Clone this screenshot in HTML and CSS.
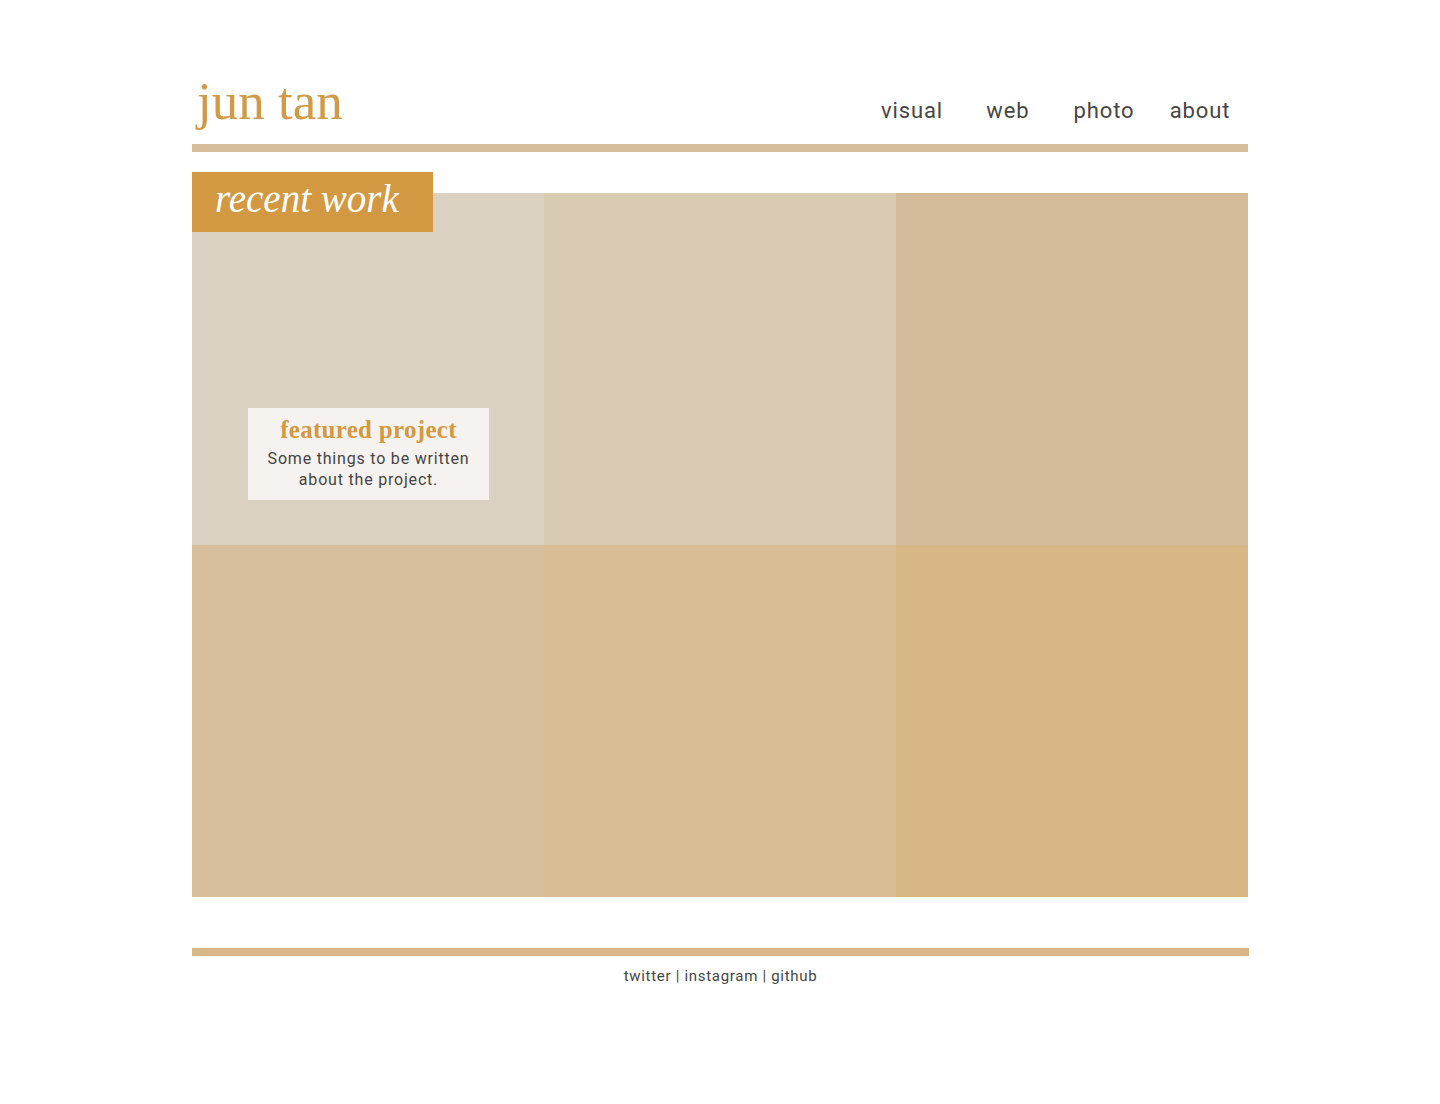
FILE: index.html
```html
<!DOCTYPE html>
<html lang="en">
<head>
<meta charset="utf-8">
<title>jun tan</title>
<link rel="stylesheet" href="styles.css">
</head>
<body>
<div class="page">
  <header class="site-header">
    <a class="logo" href="#">jun tan</a>
    <nav class="nav">
      <a href="#">visual</a>
      <a href="#">web</a>
      <a href="#">photo</a>
      <a href="#">about</a>
    </nav>
  </header>
  <main class="work">
    <h2 class="work-label">recent work</h2>
    <div class="grid">
      <div class="cell c1">
        <div class="featured">
          <h3>featured project</h3>
          <p>Some things to be written<br>about the project.</p>
        </div>
      </div>
      <div class="cell c2"></div>
      <div class="cell c3"></div>
      <div class="cell c4"></div>
      <div class="cell c5"></div>
      <div class="cell c6"></div>
    </div>
  </main>
  <footer class="site-footer">
    <p>twitter | instagram | github</p>
  </footer>
</div>
</body>
</html>
```
FILE: styles.css
```css
html, body {
  margin: 0;
  padding: 0;
  background: #fff;
}
body {
  font-family: "Roboto", "DejaVu Sans", sans-serif;
  color: #444;
}
.page {
  width: 1056px;
  margin: 0 auto;
}
.site-header {
  height: 144px;
  display: flex;
  justify-content: space-between;
  align-items: flex-end;
  border-bottom: 8px solid #d6bd9c;
}
.logo {
  font-family: "Liberation Serif", "DejaVu Serif", serif;
  font-size: 53px;
  line-height: 1;
  color: #d19a46;
  text-decoration: none;
  margin: 0 0 16px 5px;
}
.nav {
  display: flex;
  margin-bottom: 22px;
}
.nav a {
  width: 96px;
  text-align: center;
  font-size: 22px;
  line-height: 1;
  letter-spacing: 0.9px;
  color: #464646;
  text-decoration: none;
}
.work {
  position: relative;
  margin-top: 41px;
}
.work-label {
  position: absolute;
  top: -21px;
  left: 0;
  z-index: 2;
  margin: 0;
  width: 241px;
  height: 60px;
  box-sizing: border-box;
  padding-left: 23px;
  background: #d39942;
  color: #fff;
  font-family: "Liberation Serif", "DejaVu Serif", serif;
  font-style: italic;
  font-weight: normal;
  font-size: 39px;
  line-height: 54px;
}
.grid {
  display: grid;
  grid-template-columns: repeat(3, 352px);
  grid-template-rows: repeat(2, 352px);
}
.cell { position: relative; }
.c1 { background: #dbd1c2; }
.c2 { background: #d9cab4; }
.c3 { background: #d2ba9b; }
.c4 { background: #d7bf9d; }
.c5 { background: #d8bd95; }
.c6 { background: #d7b786; }
.featured {
  position: absolute;
  left: 56px;
  top: 215px;
  width: 241px;
  height: 92px;
  box-sizing: border-box;
  background: #f6f2ef;
  text-align: center;
  padding-top: 9px;
}
.featured h3 {
  margin: 0;
  font-family: "Liberation Serif", "DejaVu Serif", serif;
  font-weight: bold;
  font-size: 25px;
  line-height: 25px;
  letter-spacing: 0.3px;
  color: #d39942;
}
.featured p {
  margin: 6px 0 0;
  font-size: 16px;
  line-height: 21px;
  color: #444;
  letter-spacing: 0.8px;
}
.site-footer {
  margin-top: 51px;
  border-top: 8px solid #d7b785;
  width: 1057px;
}
.site-footer p {
  margin: 11px 0 0;
  text-align: center;
  font-size: 15px;
  line-height: 18px;
  letter-spacing: 0.7px;
  color: #444;
}
```
